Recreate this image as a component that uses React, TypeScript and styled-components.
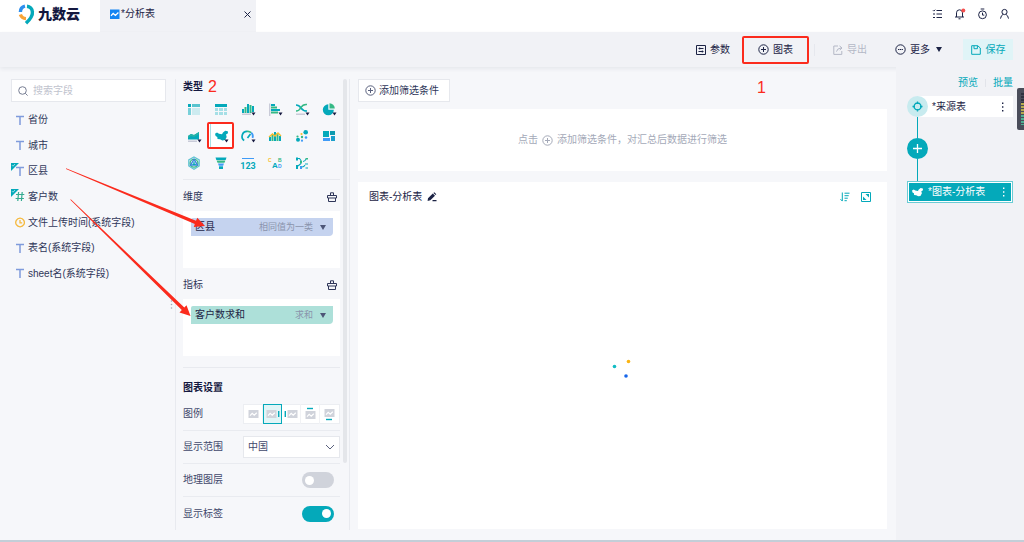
import React from "react";
import styled, { createGlobalStyle, css } from "styled-components";

const teal = "#04a9ba";
const green = "#35b985";
const blue = "#3f9bf7";
const yellow = "#f6bd2f";
const pale = "#a6dfe6";
const navy = "#1c2345";

const GlobalStyle = createGlobalStyle`
  * { box-sizing: border-box; }
  body {
    margin: 0;
    background: #f6f7fa;
    color: #2f3659;
    font: 10px/16px "Liberation Sans", "Noto Sans CJK SC", sans-serif;
  }
  button, input, select { font: inherit; color: inherit; }
  button { border: 0; padding: 0; background: none; cursor: pointer; }
  h1, h2, h3, ul, p { margin: 0; padding: 0; font: inherit; }
  ul { list-style: none; }
  a { text-decoration: none; }
  svg { display: block; flex: none; }
`;

const Page = styled.div`
  position: relative;
  min-height: 100vh;
  display: flex;
  flex-direction: column;
  border-bottom: 2px solid #c3ced8;
`;

/* Header */
const Header = styled.header`
  height: 32px;
  flex: none;
  display: flex;
  align-items: center;
  background: #fff;
`;
const Brand = styled.a`
  width: 100px;
  height: 32px;
  padding: 0 0 4px 18px;
  display: flex;
  align-items: center;
  gap: 3px;
  color: #14183f;
  font-size: 14px;
  font-weight: 900;
  line-height: 28px;
`;
const Tab = styled.div`
  width: 156px;
  height: 32px;
  padding: 0 4px 4px 10px;
  display: flex;
  align-items: center;
  gap: 1px;
  background: #f1f2f6;
  color: ${navy};
  button { margin-left: auto; }
`;
const HeaderActions = styled.nav`
  margin-left: auto;
  padding: 0 14px 4px 0;
  display: flex;
  gap: 11px;
  color: ${navy};
`;

/* Toolbar */
const Toolbar = styled.div`
  height: 35px;
  flex: none;
  padding: 0 11px;
  display: flex;
  align-items: center;
  justify-content: flex-end;
  background: #f1f2f6;
  box-shadow: 0 2px 4px rgba(40, 50, 80, 0.08);
  position: relative;
`;
const ToolButton = styled.button<{ $muted?: boolean }>`
  position: relative;
  display: flex;
  align-items: center;
  gap: 4px;
  margin-right: 28px;
  color: ${(p) => (p.$muted ? "#b4b8c6" : navy)};
`;
const MoreLabel = styled.span`
  margin-right: 2px;
`;
const ToolDivider = styled.span`
  width: 1px;
  height: 12px;
  margin: 0 18px 0 -7px;
  background: #e6e8ee;
`;
const SaveButton = styled.button`
  width: 50px;
  height: 21px;
  margin-left: -7px;
  display: flex;
  align-items: center;
  justify-content: center;
  gap: 5px;
  background: #e0f4f7;
  color: ${teal};
`;
const Highlight = styled.span<{ $x: number; $y: number }>`
  position: absolute;
  inset: ${(p) => `${-p.$y}px ${-p.$x}px`};
  border: 2px solid #fb2b1d;
  border-radius: 2px;
  pointer-events: none;
`;
const StepMark = styled.span<{ $floating?: boolean }>`
  color: #fb2b1d;
  font-size: 16px;
  font-weight: 400;
  ${(p) =>
    p.$floating &&
    css`
      position: absolute;
      left: -1px;
      top: 38px;
      line-height: 16px;
    `}
`;

/* Body columns */
const Body = styled.div`
  flex: 1;
  display: flex;
`;
const FieldPane = styled.aside`
  width: 175px;
  flex: none;
  padding: 12px 9px 10px 11px;
  position: relative;
`;
const SearchBox = styled.label`
  height: 23px;
  padding: 0 6px;
  display: flex;
  align-items: center;
  gap: 5px;
  background: #fff;
  border: 1px solid #e6e8ed;
  color: #777e93;
  input {
    width: 100%;
    min-width: 0;
    border: 0;
    padding: 0;
    outline: 0;
    background: none;
  }
  input::placeholder { color: #bfc3ce; opacity: 1; }
`;
const FieldList = styled.ul`
  height: 170px;
  margin-top: 10px;
  display: flex;
  flex-direction: column;
  justify-content: space-between;
`;
const Field = styled.li`
  position: relative;
  height: 16px;
  padding-left: 4px;
  display: flex;
  align-items: center;
  gap: 3px;
`;
const UsedFlag = styled.svg`
  position: absolute;
  left: 0;
  top: 0;
`;
const DragDots = styled.svg`
  position: absolute;
  right: 2px;
  top: 233px;
`;

const ConfigPane = styled.section`
  width: 175px;
  flex: none;
  margin: 12px 0 10px;
  padding-left: 7px;
  display: flex;
  border: solid #e8eaef;
  border-width: 0 1px;
`;
const ConfigContent = styled.div`
  width: 157px;
`;
const ScrollThumb = styled.div`
  width: 4px;
  height: 384px;
  margin-left: 3px;
  border-radius: 2px;
  background: #e4e6ea;
`;
const Heading = styled.h2<{ $tall?: boolean }>`
  height: ${(p) => (p.$tall ? 21 : 16)}px;
  display: flex;
  align-items: center;
  gap: 5px;
  color: #14183f;
  font-weight: 700;
`;
const TypeGrid = styled.div`
  margin: 0 -2px 0 -3px;
  display: grid;
  grid-template-columns: repeat(6, 27px);
`;
const TypeButton = styled.button<{ $active?: boolean }>`
  position: relative;
  height: 27px;
  svg { margin: 0 auto; }
  ${(p) =>
    p.$active &&
    css`
      background: linear-gradient(${pale}, ${pale}) 3px 2px / 1px 23px no-repeat, #fff;
    `}
`;
const Rule = styled.hr<{ $above: number; $below: number }>`
  height: 1px;
  margin: ${(p) => `${p.$above}px 0 ${p.$below}px`};
  border: 0;
  background: #e8eaef;
`;
const GroupHeader = styled.div`
  height: 31px;
  padding: 3px 3px 0 0;
  display: flex;
  align-items: center;
  justify-content: space-between;
`;
const DropZone = styled.div`
  height: 57px;
  padding: 7px 7px 7px 8px;
  background: #fff;
`;
const Chip = styled.div<{ $tone: string }>`
  height: 18px;
  padding: 0 7px 0 4px;
  display: flex;
  align-items: center;
  justify-content: space-between;
  border-radius: 2px 0 4px 0;
  background: ${(p) => p.$tone};
  color: ${navy};
  button {
    display: flex;
    align-items: center;
    gap: 7px;
    color: #8a94ac;
    font-size: 9px;
  }
  svg { color: #4d5678; }
`;
const Setting = styled.div`
  height: 33px;
  display: flex;
  align-items: center;
  justify-content: space-between;
  border-bottom: 1px solid #e9ebf0;
  color: #41486b;
  &:last-child { border: 0; }
`;
const LegendGroup = styled.div`
  display: flex;
  height: 20px;
  background: #fff;
  border: 1px solid #eceef2;
`;
const LegendOption = styled.label`
  width: 19px;
  height: 20px;
  margin-top: -1px;
  display: flex;
  align-items: center;
  justify-content: center;
  border-right: 1px solid #f1f2f5;
  cursor: pointer;
  input { position: absolute; opacity: 0; width: 1px; height: 1px; margin: 0; }
  &:last-child { border: 0; }
  &:has(input:checked) { border: 1px solid ${teal}; background: #e1f5f7; }
`;
const SelectBox = styled.div`
  position: relative;
  width: 97px;
  select {
    width: 100%;
    height: 22px;
    padding: 0 4px;
    appearance: none;
    background: #fff;
    border: 1px solid #e6e8ed;
    border-radius: 0;
  }
  svg { position: absolute; right: 5px; top: 7px; pointer-events: none; }
`;
const Toggle = styled.input`
  appearance: none;
  width: 32px;
  height: 16px;
  margin: 0 6px 0 0;
  padding: 3px;
  border-radius: 8px;
  background: #d0d3db;
  display: flex;
  align-items: center;
  cursor: pointer;
  &::before {
    content: "";
    width: 9px;
    height: 9px;
    border-radius: 50%;
    background: #fff;
  }
  &:checked { background: ${teal}; justify-content: flex-end; }
`;

const Main = styled.main`
  flex: 1;
  min-width: 0;
  padding: 12px 9px 11px 8px;
  display: flex;
  flex-direction: column;
`;
const FilterButton = styled.button`
  align-self: flex-start;
  height: 23px;
  padding: 0 10px 0 6px;
  display: flex;
  align-items: center;
  gap: 3px;
  background: #fff;
  border: 1px solid #e6e8ed;
  svg { color: #5a617d; }
`;
const FilterHint = styled.p`
  height: 62px;
  margin: 7px 0 11px;
  display: flex;
  align-items: center;
  justify-content: center;
  gap: 4px;
  background: #fff;
  color: #a4a9b8;
`;
const ChartPanel = styled.section`
  flex: 1;
  display: flex;
  flex-direction: column;
  background: #fff;
`;
const ChartHeader = styled.div`
  height: 30px;
  padding: 0 16px 0 11px;
  display: flex;
  align-items: center;
  gap: 5px;
  color: ${navy};
`;
const ChartTools = styled.div`
  margin-left: auto;
  display: flex;
  gap: 11px;
  color: ${teal};
`;
const Canvas = styled.div`
  flex: 1;
  display: flex;
  align-items: center;
  justify-content: center;
  padding: 0 2px 6px 0;
`;

const FlowPane = styled.aside`
  position: relative;
  width: 128px;
  flex: none;
  padding: 8px 11px;
  background: #f1f2f6;
`;
const FlowLinks = styled.div`
  height: 16px;
  margin-bottom: 5px;
  display: flex;
  justify-content: flex-end;
  align-items: center;
  gap: 7px;
  a { color: ${teal}; }
  span { width: 1px; height: 8px; background: #e2e4ea; }
`;
const SourceNode = styled.div`
  height: 21px;
  margin-left: 10px;
  display: flex;
  align-items: center;
  background: #fff;
  color: ${navy};
  > svg { margin: 0 4px 0 -10px; }
`;
const NodeMenu = styled.button`
  margin: 0 9px 0 auto;
`;
const Connector = styled.div<{ $length: number }>`
  width: 1px;
  height: ${(p) => p.$length}px;
  margin-left: 10px;
  background: ${teal};
`;
const AddNode = styled.button`
  width: 21px;
  height: 21px;
  border-radius: 50%;
  display: flex;
  align-items: center;
  justify-content: center;
  background: ${teal};
`;
const CurrentNode = styled.div`
  height: 22px;
  padding-left: 3px;
  display: flex;
  align-items: center;
  gap: 4px;
  border: 1px solid #6accd5;
  box-shadow: inset 0 0 0 1px #fff;
  background: ${teal};
  color: #fff;
  ${NodeMenu} { margin-right: 7px; }
`;
const LevelMeter = styled.svg`
  position: absolute;
  right: 0;
  top: 21px;
`;
const Arrows = styled.svg`
  position: absolute;
  left: 0;
  top: 0;
  pointer-events: none;
`;

/* Icons */
const line = { fill: "none", stroke: "currentColor", strokeWidth: 1 };

const Logo = () => (
  <svg width="17" height="22" viewBox="0 0 17 22" fill="none" strokeWidth="3.4">
    <path d="M2.4 9A6 6 0 0 1 7 3.2" stroke="#2e8fee" />
    <path d="M2.4 11.5A6.2 6.2 0 0 0 8 15.6" stroke="#f8a436" />
    <path d="M9 3.200A6 6 0 0 1 14.400 8.800Q15 13.800 8 20.300" stroke={teal} />
  </svg>
);
const PlusCircle = () => (
  <svg width="11" height="11" viewBox="0 0 11 11" {...line}>
    <circle cx="5.5" cy="5.5" r="4.7" />
    <path d="M3 5.5h5M5.5 3v5" />
  </svg>
);
const Caret = () => (
  <svg width="6" height="5" viewBox="0 0 6 5" fill="currentColor"><path d="M0 0h6L3 5z" /></svg>
);
const ClearIcon = () => (
  <svg width="10" height="10" viewBox="0 0 10 10" {...line}>
    <path d="M3.500 3.500V.8h3v2.700M.5 3.500h9v2.500h-9zM1.500 6v3.500h7V6" />
  </svg>
);
const MapShape = () => (
  <path d="M0 3.2L2 2l2 1.2 3 .5 1-1.6L10.2.2l2.6.5.2 2-2 1.2.7 2.6L10 9.5 7.4 10 5 8.700 2.500 8.500 2.300 6.400.6 5.600z" />
);
const Dots = () => (
  <svg width="3" height="10" viewBox="0 0 3 10" fill="currentColor">
    <path d="M1 .5h1.400v1.400H1zM1 4.300h1.400v1.400H1zM1 8.100h1.400v1.400H1z" />
  </svg>
);

const fieldIcons = {
  text: <path d="M1 1.500h8M5 1.500V10" stroke="#7f9bdc" strokeWidth="1.500" />,
  number: <path d="M3.600 1L2.800 10M7.200 1L6.400 10M1 3.500h8.300M.6 7.500h8.300" stroke="#35ab91" strokeWidth="1.200" />,
  time: <path d="M5 1.200a4.300 4.300 0 1 0 .1 0zM5 3v2.800h2.200" stroke="#f5b93e" strokeWidth="1.300" />,
};

const fields: { name: string; kind: keyof typeof fieldIcons; used?: boolean }[] = [
  { name: "省份", kind: "text" },
  { name: "城市", kind: "text" },
  { name: "区县", kind: "text", used: true },
  { name: "客户数", kind: "number", used: true },
  { name: "文件上传时间(系统字段)", kind: "time" },
  { name: "表名(系统字段)", kind: "text" },
  { name: "sheet名(系统字段)", kind: "text" },
];

const chartTypes: { name: string; menu?: boolean; active?: boolean; art: React.ReactNode }[] = [
  {
    name: "分组表",
    art: (<><path d="M4 3h3v3H4z" fill={teal} /><path d="M8 3h8v3H8z" fill="#58c4cf" /><path d="M4 7h3v7H4z" fill="#79d0d9" /><path d="M8 7h8v7H8z" fill="#cdebf0" /></>),
  },
  {
    name: "明细表",
    art: (<><path d="M4 3h12v3H4z" fill={teal} /><path d="M4 7h3v3H4zM8 7h4v3H8zM13 7h3v3h-3zM4 11h3v3H4zM8 11h4v3H8zM13 11h3v3h-3z" fill={pale} /></>),
  },
  {
    name: "柱形图", menu: true,
    art: (<><path d="M4 8h2v4H4zM9 3h2v9H9zM14 5h2v6h-2z" fill={teal} /><path d="M6.500 6h2v6h-2zM11.500 4h2v8h-2z" fill={green} /><path d="M4 12.500h9V14H4z" fill="#c9cbd8" /></>),
  },
  {
    name: "条形图", menu: true,
    art: (<><path d="M4 2.500h1.400V15H4z" fill="#c9cbd8" /><path d="M6 3h4v2H6zM6 8h9v2H6z" fill={teal} /><path d="M6 5.500h6v2H6zM6 10.500h7v2H6z" fill={green} /></>),
  },
  {
    name: "折线图", menu: true,
    art: (<><path d="M4 4q3 0 5 3t6 3" fill="none" stroke={teal} strokeWidth="1.500" /><path d="M4 10q3 0 5-3.500t6-3" fill="none" stroke={green} strokeWidth="1.500" /><path d="M4 12.500h9V14H4z" fill="#c9cbd8" /></>),
  },
  {
    name: "饼图", menu: true,
    art: (<><path d="M9.300 3.300v5.400h5.500A5.500 5.500 0 1 1 9.300 3.300z" fill={teal} /><path d="M10.500 2.200A5.400 5.400 0 0 1 15.800 7.500h-5.300z" fill={green} /></>),
  },
  {
    name: "面积图", menu: true,
    art: (<><path d="M4 8l3-2 3 1 5-3v7.500H4z" fill={teal} /><path d="M4 8l3-2 3 1 5-3v2l-5 3-3-1-3 2z" fill="#27b3a6" /><path d="M4 12.500h9V14H4z" fill="#c9cbd8" /></>),
  },
  { name: "地图", menu: true, active: true, art: (<g transform="translate(4 2.5)" fill={teal}><MapShape /></g>) },
  {
    name: "仪表盘", menu: true,
    art: (<g fill="none" strokeWidth="1.700"><path d="M6.200 12.500A5 5 0 0 1 9 3.400" stroke={teal} /><path d="M9 3.400a5 5 0 0 1 4.200 1.300" stroke={green} /><path d="M13.200 4.700A5 5 0 0 1 14.600 10" stroke={blue} /><path d="M9.500 10l3-4" stroke={teal} /></g>),
  },
  {
    name: "组合图",
    art: (<><path d="M4 9h2v4H4zM9 4h2v9H9zM14 8h2v5h-2z" fill={teal} /><path d="M6.500 6h2v7h-2zM11.500 5h2v8h-2z" fill={green} /><path d="M4 9l3.500-3 2.500 2 3-3 3 3" fill="none" stroke={yellow} strokeWidth="1.400" /></>),
  },
  {
    name: "散点图",
    art: (<><circle cx="13.700" cy="4.300" r="2.300" fill={teal} /><circle cx="6" cy="11.800" r="2" fill={teal} /><circle cx="9.500" cy="6" r="1.100" fill={yellow} /><circle cx="5.500" cy="8.500" r="1.100" fill={green} /><circle cx="10" cy="9" r="1.200" fill={green} /><circle cx="14" cy="9.500" r="1.300" fill={blue} /><circle cx="10" cy="12.700" r="1.100" fill={blue} /></>),
  },
  {
    name: "矩形树图",
    art: (<><path d="M4 3h6v6H4z" fill={teal} /><path d="M11 3h5v4h-5z" fill="#0f9bb0" /><path d="M4 10h7v3H4z" fill={blue} /><path d="M12 8h4v5h-4z" fill="#1b9fcb" /></>),
  },
  {
    name: "雷达图",
    art: (<g fill="none" strokeWidth="1.300"><path d="M10 2l5.200 3v6L10 14.200 4.800 11V5z" stroke="#61c3d2" /><circle cx="10" cy="8.200" r="3.900" stroke={green} /><path d="M10 4.200l3.500 6h-7z" stroke="#3b82e0" /><path d="M10 6.400v3.200M8.400 9.400h3.400" stroke={teal} /></g>),
  },
  {
    name: "漏斗图",
    art: (<><path d="M4.500 2.500h11l-.8 2.400H5.300z" fill={teal} /><path d="M5.600 5.500h8.800l-.9 2.300h-7z" fill={green} /><path d="M7 8.400h6l-.8 2.300H7.800z" fill={blue} /><path d="M8 11.300h4V14H8z" fill={teal} /></>),
  },
  {
    name: "指标卡",
    art: (<><path d="M4 3h12v1H4z" fill={blue} /><text x="10" y="14" textAnchor="middle" fontSize="9" fontFamily="Roboto, sans-serif" fontWeight="700" fill={teal}>123</text></>),
  },
  {
    name: "词云",
    art: (<g fontWeight="700"><text x="7" y="13" fontSize="8" fill={teal}>A</text><text x="3" y="7" fontSize="5" fill={yellow}>C</text><text x="13" y="7" fontSize="5" fill={green}>B</text><text x="13" y="13" fontSize="5" fill={blue}>D</text></g>),
  },
  {
    name: "桑基图",
    art: (<><path d="M4 2.500h2v3H4zM4 10h2v4H4z" fill={teal} /><path d="M8 5.500h2v3H8zM13.500 3H16v1.500h-2.500z" fill={green} /><path d="M8 11h2v3H8z" fill={blue} /><path d="M6 3.500h1.500L9 5.500M6 11l3-2.500M11 6.500q2 0 3-2.400M10 12q2 0 3-2M13 9h3M13.500 13H16" stroke={teal} strokeWidth="1.100" fill="none" /></>),
  },
];

const legendSpots = [
  { name: "无图例", bar: "" },
  { name: "右侧", bar: "M13 4h1.400v6H13z" },
  { name: "左侧", bar: "M.6 4H2v6H.6z" },
  { name: "上方", bar: "M4 .8h6v1.400H4z" },
  { name: "下方", bar: "M4 11.800h6v1.400H4z" },
];

const Legend = ({ bar, index }: { bar: string; index: number }) => {
  const dx = index === 1 ? -1 : index === 2 ? 1 : 0;
  const dy = index === 3 ? 1 : index === 4 ? -1 : 0;
  return (
    <svg width="15" height="14" viewBox="0 0 15 14">
      <g transform={`translate(${dx} ${dy})`}>
        <path d="M2.500 3h10v8h-10z" fill="#d0d3db" />
        <path d="M4 8.600l2.200-2.200 2 1.800 2.600-2.400" fill="none" stroke="#fff" strokeWidth="1.200" />
      </g>
      <path d={bar} fill={teal} />
    </svg>
  );
};

export default function App() {
  return (
    <Page>
      <GlobalStyle />
      <Header>
        <Brand href="#"><Logo />九数云</Brand>
        <Tab>
          <svg width="10" height="10" viewBox="0 0 10 10">
            <path d="M0 .5h9.500V10H0z" fill="#1284f2" />
            <path d="M1 6.800l2.200-2.400 2.200 2 3-2.800" fill="none" stroke="#fff" strokeWidth="1.300" />
          </svg>
          *分析表
          <button aria-label="关闭">
            <svg width="9" height="9" viewBox="0 0 9 9" {...line}><path d="M1.500 1.500l6 6M7.500 1.500l-6 6" /></svg>
          </button>
        </Tab>
        <HeaderActions>
          <button aria-label="任务">
            <svg width="11" height="12" viewBox="0 0 11 12" {...line}>
              <path d="M4.500 2.500h5.500M4.500 6h5.500M4.500 9.500h5.500M1 2.300l.8.800L3.200 1.700M1 6h2M1 9.500h2" />
            </svg>
          </button>
          <button aria-label="通知">
            <svg width="12" height="12" viewBox="0 0 12 12" {...line}>
              <path d="M1 9h9M2.500 9V4.800a3 3 0 0 1 6 0V9M4.500 10.800h2" />
              <circle cx="9.300" cy="2.600" r="2" fill="#f5504e" stroke="none" />
            </svg>
          </button>
          <button aria-label="定时">
            <svg width="11" height="12" viewBox="0 0 11 12" {...line}>
              <circle cx="5.500" cy="6.800" r="3.900" /><path d="M3.700 1h3.600M5.500 4.600v2.500h1.800" />
            </svg>
          </button>
          <button aria-label="账户">
            <svg width="11" height="12" viewBox="0 0 11 12" {...line}>
              <circle cx="5.500" cy="4" r="2.600" /><path d="M1.500 10.600Q2 7.200 4.200 6.300M9.500 10.600Q9 7.200 6.800 6.300" />
            </svg>
          </button>
        </HeaderActions>
      </Header>

      <Toolbar>
        <ToolButton>
          <svg width="10" height="10" viewBox="0 0 10 10" {...line}>
            <path d="M.5.5h9v9h-9zM2.500 3.500h5M2.500 6.500h5M3.700 2.500v2M6.300 5.500v2" />
          </svg>
          参数
        </ToolButton>
        <ToolButton>
          <PlusCircle />图表
          <Highlight $x={16} $y={6} />
          <StepMark $floating>1</StepMark>
        </ToolButton>
        <ToolDivider />
        <ToolButton $muted>
          <svg width="10" height="10" viewBox="0 0 10 10" {...line}>
            <path d="M5 1H.8v8.400h8V6M3.500 6.600Q4 3.400 8 3M6.500.9L9 3 6.800 5" />
          </svg>
          导出
        </ToolButton>
        <ToolButton>
          <svg width="11" height="11" viewBox="0 0 11 11" {...line}>
            <circle cx="5.500" cy="5.500" r="4.700" /><path d="M3 5.500h5" strokeDasharray="1.300 .5" />
          </svg>
          <MoreLabel>更多</MoreLabel><Caret />
        </ToolButton>
        <SaveButton>
          <svg width="10" height="10" viewBox="0 0 10 10" {...line}>
            <path d="M.7.7h6L9.300 3v6.300H.7zM3 .7v3h3.400v-3" />
          </svg>
          保存
        </SaveButton>
      </Toolbar>

      <Body>
        <FieldPane>
          <SearchBox>
            <svg width="10" height="10" viewBox="0 0 10 10" {...line}>
              <circle cx="4.500" cy="4.500" r="3.800" /><path d="M7.300 7.300l2.300 2.300" />
            </svg>
            <input placeholder="搜索字段" aria-label="搜索字段" />
          </SearchBox>
          <FieldList>
            {fields.map((f) => (
              <Field key={f.name}>
                {f.used && (
                  <UsedFlag width="8" height="8" viewBox="0 0 8 8">
                    <path d="M0 0h8L0 8z" fill={teal} />
                    <path d="M1 2.200l1 1L4 1" stroke="#fff" strokeWidth=".6" fill="none" />
                  </UsedFlag>
                )}
                <svg width="10" height="11" viewBox="0 0 10 11" fill="none">{fieldIcons[f.kind]}</svg>
                {f.name}
              </Field>
            ))}
          </FieldList>
          <DragDots width="3" height="9" viewBox="0 0 3 9" fill="#a3a8b8">
            <circle cx="1.500" cy="1" r=".8" /><circle cx="1.500" cy="4.500" r=".8" /><circle cx="1.500" cy="8" r=".8" />
          </DragDots>
        </FieldPane>

        <ConfigPane>
          <ConfigContent>
            <Heading>类型<StepMark>2</StepMark></Heading>
            <TypeGrid>
              {chartTypes.map((t) => (
                <TypeButton key={t.name} aria-label={t.name} $active={t.active}>
                  <svg width="20" height="16" viewBox="0 0 20 16">
                    {t.art}
                    {t.menu && <path d="M13.500 11.500h4L15.500 14.500z" fill="#14183f" />}
                  </svg>
                  {t.active && <Highlight $x={0} $y={0} />}
                </TypeButton>
              ))}
            </TypeGrid>
            <Rule $above={3} $below={0} />
            <GroupHeader>维度<button aria-label="清空维度"><ClearIcon /></button></GroupHeader>
            <DropZone>
              <Chip $tone="#c5d3ef">区县<button>相同值为一类<Caret /></button></Chip>
            </DropZone>
            <GroupHeader>指标<button aria-label="清空指标"><ClearIcon /></button></GroupHeader>
            <DropZone>
              <Chip $tone="#ade0d9">客户数求和<button>求和<Caret /></button></Chip>
            </DropZone>
            <Rule $above={11} $below={9} />
            <Heading $tall>图表设置</Heading>
            <div>
              <Setting>
                图例
                <LegendGroup role="radiogroup" aria-label="图例">
                  {legendSpots.map((s, i) => (
                    <LegendOption key={s.name}>
                      <input type="radio" name="legend" aria-label={s.name} defaultChecked={i === 1} />
                      <Legend bar={s.bar} index={i} />
                    </LegendOption>
                  ))}
                </LegendGroup>
              </Setting>
              <Setting>
                <label htmlFor="range">显示范围</label>
                <SelectBox>
                  <select id="range" defaultValue="cn"><option value="cn">中国</option></select>
                  <svg width="10" height="8" viewBox="0 0 10 8" {...line} stroke="#5a617d"><path d="M1 2l4 4 4-4" /></svg>
                </SelectBox>
              </Setting>
              <Setting>
                <label htmlFor="geo">地理图层</label>
                <Toggle id="geo" type="checkbox" />
              </Setting>
              <Setting>
                <label htmlFor="labels">显示标签</label>
                <Toggle id="labels" type="checkbox" defaultChecked />
              </Setting>
            </div>
          </ConfigContent>
          <ScrollThumb />
        </ConfigPane>

        <Main>
          <FilterButton><PlusCircle />添加筛选条件</FilterButton>
          <FilterHint>点击 <PlusCircle /> 添加筛选条件，对汇总后数据进行筛选</FilterHint>
          <ChartPanel>
            <ChartHeader>
              <h1>图表-分析表</h1>
              <button aria-label="重命名">
                <svg width="10" height="10" viewBox="0 0 10 10" fill="currentColor">
                  <path d="M1 6.300L5.800 1.500 8 3.700 3.300 8.300.6 9zM6.400.9L7.300.2 9.300 2.200 8.600 3.100zM5.500 8h4v1.200h-4z" />
                </svg>
              </button>
              <ChartTools>
                <button aria-label="排序">
                  <svg width="10" height="10" viewBox="0 0 10 10" {...line}>
                    <path d="M2.300.5v8.500M.5 7.200l1.800 1.900M4.500 1.200h5M4.500 3.700h4.200M4.500 6.200h3.300M4.500 8.700h2.300" />
                  </svg>
                </button>
                <button aria-label="放大">
                  <svg width="10" height="10" viewBox="0 0 10 10" {...line}>
                    <path d="M.5.5h9v9h-9z" /><path d="M4.500 2h3.500V5.500zM2 4.500V8h3.500z" fill="currentColor" stroke="none" />
                  </svg>
                </button>
              </ChartTools>
            </ChartHeader>
            <Canvas>
              <svg width="20" height="20" viewBox="0 0 20 20" role="img" aria-label="加载中">
                <circle cx="2.500" cy="8.500" r="1.800" fill="#12bcc4" />
                <circle cx="16.500" cy="3.500" r="1.800" fill="#fbb413" />
                <circle cx="14" cy="18" r="1.800" fill="#1766ea" />
              </svg>
            </Canvas>
          </ChartPanel>
        </Main>

        <FlowPane>
          <FlowLinks><a href="#">预览</a><span /><a href="#">批量</a></FlowLinks>
          <SourceNode>
            <svg width="21" height="21" viewBox="0 0 21 21">
              <circle cx="10.500" cy="10.500" r="10.500" fill="#c8ebef" />
              <path d="M10.500 7a3.500 3.500 0 1 0 .1 0zM10.500 5.500v2.500M10.500 13v2.500M5.500 10.500H8M13 10.500h2.500" fill="none" stroke={teal} strokeWidth="1.300" />
            </svg>
            *来源表
            <NodeMenu aria-label="来源表菜单"><Dots /></NodeMenu>
          </SourceNode>
          <Connector $length={21} />
          <AddNode aria-label="添加节点">
            <svg width="9" height="9" viewBox="0 0 9 9"><path d="M0 4.500h9M4.500 0v9" stroke="#fff" strokeWidth="1.300" /></svg>
          </AddNode>
          <Connector $length={22} />
          <CurrentNode>
            <svg width="13" height="11" viewBox="-1 -1 15 13" fill="#fff"><MapShape /></svg>
            *图表-分析表
            <NodeMenu aria-label="图表菜单"><Dots /></NodeMenu>
          </CurrentNode>
          <LevelMeter width="7" height="42" viewBox="0 0 7 42">
            <path d="M7 0H2Q0 0 0 2v38q0 2 2 2h5z" fill="#4a4d5a" />
            <path d="M5.500 5v10" stroke="#2f3240" strokeWidth="3" strokeDasharray="2 1" />
            <path d="M5.500 15v11" stroke="#b5a94c" strokeWidth="3" strokeDasharray="2 1" />
            <path d="M5.500 27v10" stroke="#4fae92" strokeWidth="3" strokeDasharray="2 1" />
          </LevelMeter>
        </FlowPane>
      </Body>

      <Arrows width="220" height="330" viewBox="0 0 220 330" fill="#fb2b1d">
        <path d="M66 168.300L196 220.800l1.300-3L205 226l-11.200.9 1-2.900L66 168.900z" />
        <path d="M70.800 199.200L184.300 307.500l2.200-2.300 4 10.800-11-3.500 2.300-2.400L70.300 199.700z" />
      </Arrows>
    </Page>
  );
}
